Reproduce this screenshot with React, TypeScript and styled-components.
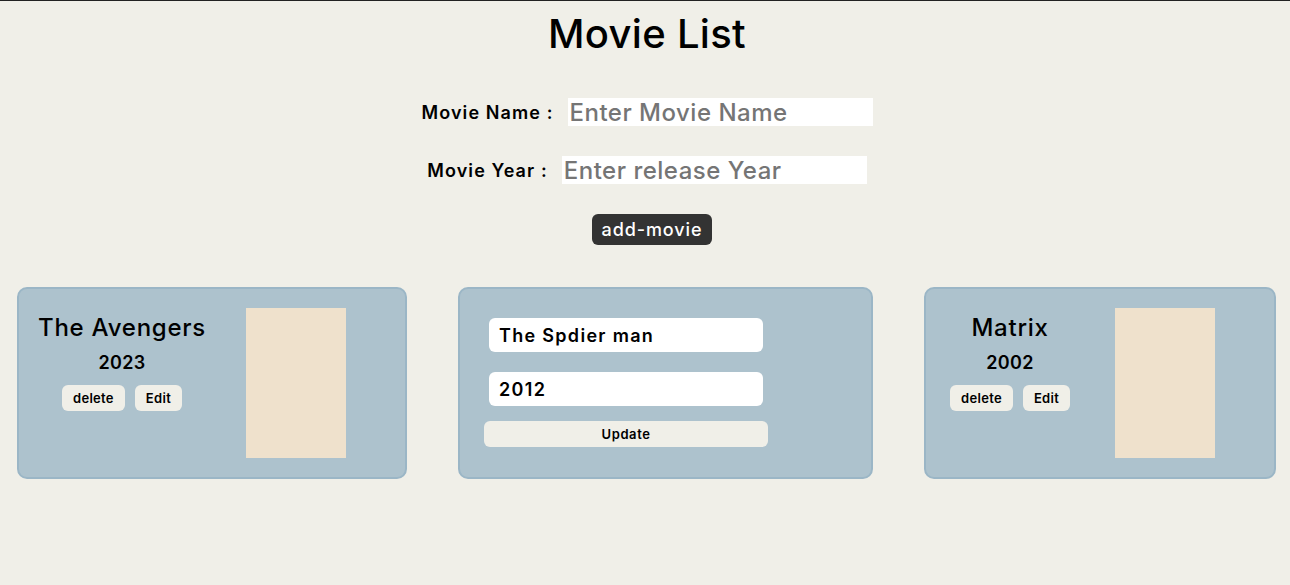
import React from "react";
import styled, { createGlobalStyle } from "styled-components";

const GlobalStyle = createGlobalStyle`
  html, body {
    margin: 0;
    padding: 0;
    background: #f0efe8;
  }
  body {
    border-top: 1px solid #222222;
    font-family: Inter, "Open Sans", sans-serif;
    color: #000;
  }
`;

const Page = styled.div`
  min-height: 584px;
`;

const Header = styled.header`
  display: flex;
  flex-direction: column;
  align-items: center;
  padding-left: 4px;
`;

const Title = styled.h1`
  margin: 9px 0 0;
  font-size: 40px;
  line-height: 48px;
  font-weight: 500;
  letter-spacing: 0.3px;
`;

const FormRow = styled.div<{ $mt: number }>`
  display: flex;
  align-items: center;
  gap: 14px;
  margin-top: ${(p) => p.$mt}px;
`;

const Label = styled.label`
  font-size: 18px;
  font-weight: 600;
  letter-spacing: 1.1px;
`;

const TextInput = styled.input`
  width: 305px;
  height: 28px;
  box-sizing: border-box;
  border: none;
  outline: none;
  background: #ffffff;
  padding: 0 2px;
  font-family: inherit;
  font-size: 24px;
  font-weight: 500;
  letter-spacing: 0.5px;
  &::placeholder {
    color: #757575;
  }
`;

const AddButton = styled.button`
  margin-top: 30px;
  margin-left: 10px;
  height: 31px;
  padding: 0 10px;
  border: none;
  border-radius: 6px;
  background: #333333;
  color: #ffffff;
  font-family: inherit;
  font-size: 18px;
  font-weight: 500;
  letter-spacing: 0.9px;
`;

const CardRow = styled.section`
  display: flex;
  align-items: stretch;
  gap: 51px;
  padding-left: 17px;
  margin-top: 42px;
`;

const Card = styled.div`
  display: flex;
  align-items: flex-start;
  gap: 40px;
  padding: 19px 59px 19px 19px;
  background: #adc2cd;
  border: 2px solid #9bb6c6;
  border-radius: 10px;
`;

const Info = styled.div`
  display: flex;
  flex-direction: column;
  align-items: center;
`;

const MovieTitle = styled.h2`
  margin: 0;
  font-size: 24px;
  line-height: 40px;
  font-weight: 500;
  letter-spacing: 0.75px;
  white-space: nowrap;
`;

const MovieYear = styled.div`
  font-size: 18px;
  line-height: 30px;
  font-weight: 600;
  letter-spacing: 0.3px;
`;

const Actions = styled.div`
  display: flex;
  margin-top: 2px;
`;

const SmallButton = styled.button`
  margin: 5px;
  height: 26px;
  padding: 0 11px;
  border: none;
  border-radius: 6px;
  background: #f0efe8;
  color: #000;
  font-family: inherit;
  font-size: 13px;
  font-weight: 600;
  letter-spacing: 0.3px;
`;

const Poster = styled.div`
  width: 100px;
  height: 150px;
  background: #efe1cc;
  flex-shrink: 0;
`;

const EditCard = styled.div`
  display: flex;
  flex-direction: column;
  align-items: center;
  padding: 29px 103px 19px 24px;
  background: #adc2cd;
  border: 2px solid #9bb6c6;
  border-radius: 10px;
`;

const EditInput = styled.input<{ $mt?: number }>`
  width: 274px;
  height: 34px;
  box-sizing: border-box;
  margin-top: ${(p) => p.$mt ?? 0}px;
  border: none;
  outline: none;
  border-radius: 6px;
  background: #ffffff;
  padding: 0 10px;
  font-family: inherit;
  font-size: 18px;
  font-weight: 600;
  letter-spacing: 1.3px;
  color: #000;
`;

const UpdateButton = styled.button`
  width: 284px;
  height: 26px;
  margin-top: 15px;
  border: none;
  border-radius: 6px;
  background: #f0efe8;
  color: #000;
  font-family: inherit;
  font-size: 13px;
  font-weight: 600;
  letter-spacing: 0.6px;
`;

type Movie = { title: string; year: string };

const MovieCard = ({ movie }: { movie: Movie }) => (
  <Card>
    <Info>
      <MovieTitle>{movie.title}</MovieTitle>
      <MovieYear>{movie.year}</MovieYear>
      <Actions>
        <SmallButton>delete</SmallButton>
        <SmallButton>Edit</SmallButton>
      </Actions>
    </Info>
    <Poster />
  </Card>
);

export default function App() {
  return (
    <Page>
      <GlobalStyle />
      <Header>
        <Title>Movie List</Title>
        <FormRow $mt={40}>
          <Label>Movie Name :</Label>
          <TextInput placeholder="Enter Movie Name" />
        </FormRow>
        <FormRow $mt={30}>
          <Label>Movie Year :</Label>
          <TextInput placeholder="Enter release Year" />
        </FormRow>
        <AddButton>add-movie</AddButton>
      </Header>
      <CardRow>
        <MovieCard movie={{ title: "The Avengers", year: "2023" }} />
        <EditCard>
          <EditInput defaultValue="The Spdier man" />
          <EditInput $mt={20} defaultValue="2012" />
          <UpdateButton>Update</UpdateButton>
        </EditCard>
        <MovieCard movie={{ title: "Matrix", year: "2002" }} />
      </CardRow>
    </Page>
  );
}
